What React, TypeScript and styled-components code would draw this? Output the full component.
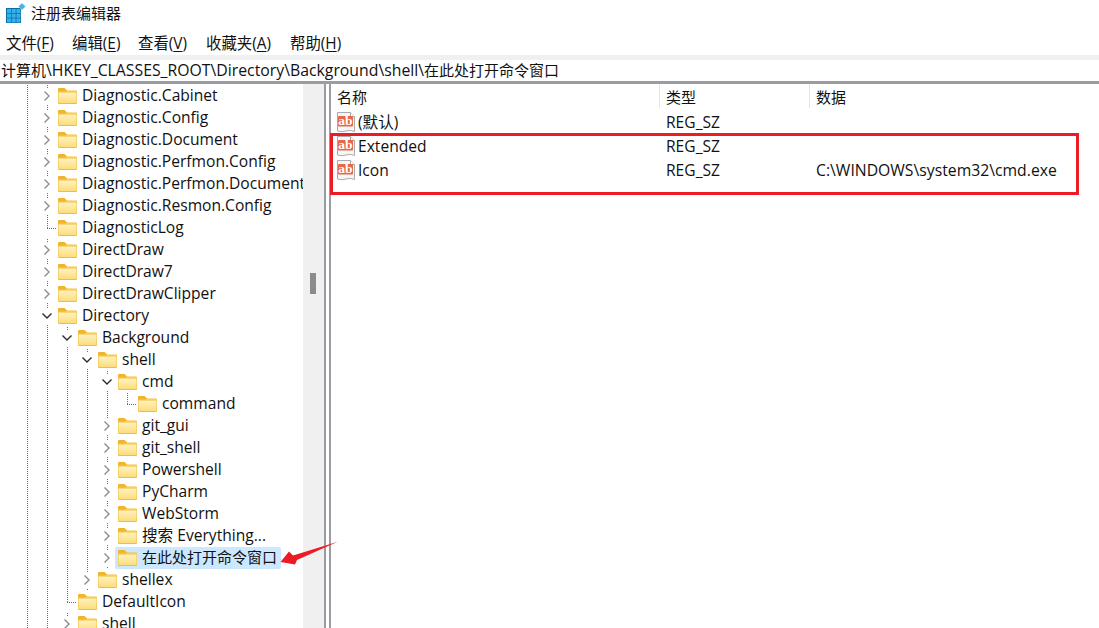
import React from "react";
import styled, { createGlobalStyle } from "styled-components";

const Global = createGlobalStyle`
  html, body { margin: 0; padding: 0; background: #fff; }
  #root { width: 1099px; height: 628px; overflow: hidden; }
  * { box-sizing: border-box; }
`;

const FONT = `"Open Sans", "Noto Sans", "Noto Sans CJK SC", sans-serif`;

const Page = styled.div`
  position: relative;
  width: 1099px;
  height: 628px;
  display: flex;
  flex-direction: column;
  overflow: hidden;
  font-family: ${FONT};
  font-size: 15.6px;
  color: #111;
`;
const TitleBar = styled.div`
  height: 28px;
  padding-left: 6px;
  display: flex;
  align-items: center;
  gap: 5px;
  font-size: 15px;
  flex: none;
  padding-bottom: 3px;
`;
const MenuBar = styled.div`
  height: 27px;
  padding: 2px 0 0 6px;
  display: grid;
  grid-template-columns: 66px 66px 68px 84px auto;
  align-items: center;
  font-size: 15.4px;
  flex: none;
  u { text-underline-offset: 2px; }
`;
const Band = styled.div`
  height: 5px;
  background: #f0f0f0;
  flex: none;
`;
const AddressBar = styled.div`
  height: 21px;
  padding: 0 0 2px 1px;
  display: flex;
  align-items: center;
  white-space: nowrap;
  font-size: 15.8px;
  flex: none;
`;
const Cjk = styled.span`
  font-size: 15px;
`;
const Rule = styled.div`
  height: 3px;
  background: #9a9ca1;
  flex: none;
`;
const Body = styled.div`
  flex: 1;
  min-height: 0;
  display: flex;
`;
const TreePane = styled.div`
  width: 303px;
  flex: none;
  overflow: hidden;
  padding-top: 1px;
`;
const Scrollbar = styled.div`
  width: 21px;
  flex: none;
  background: #f0f0f0;
  padding: 189px 0 0 7px;
`;
const Thumb = styled.div`
  width: 6px;
  height: 21px;
  background: #8b8b8b;
`;
const Splitter = styled.div`
  width: 7px;
  flex: none;
  border-left: 2px solid #9a9ca1;
  border-right: 2px solid #9a9ca1;
`;
const TreeRow = styled.div`
  height: 22px;
  padding-left: 17px;
  display: flex;
  align-items: stretch;
  white-space: nowrap;
`;
const Cell = styled.div<{ $line?: boolean }>`
  position: relative;
  width: 20px;
  flex: none;
  display: flex;
  align-items: center;
  justify-content: center;
  background-image: ${(p) =>
    p.$line ? "repeating-linear-gradient(to bottom, #6e6e6e 0 1px, transparent 1px 2px)" : "none"};
  background-size: 1px 100%;
  background-position: 10px 0;
  background-repeat: no-repeat;
`;
const Elbow = styled.div`
  width: 20px;
  flex: none;
  background-image:
    repeating-linear-gradient(to bottom, #6e6e6e 0 1px, transparent 1px 2px),
    repeating-linear-gradient(to right, #6e6e6e 0 1px, transparent 1px 2px);
  background-size: 1px 11px, 10px 1px;
  background-position: 10px 0, 10px 11px;
  background-repeat: no-repeat;
`;
const ChevronBox = styled.svg`
  width: 12px;
  height: 16px;
  background: #fff;
  display: block;
`;
const Entry = styled.div<{ $selected?: boolean }>`
  display: flex;
  align-items: center;
  height: 22px;
  margin-left: -2px;
  padding: 0 4px 0 3px;
  gap: 5px;
  border-radius: 2px;
  background: ${(p) => (p.$selected ? "#cce8ff" : "transparent")};
`;
const EntryText = styled.span<{ $cjk?: boolean }>`
  line-height: 20px;
  margin-bottom: 2px;
  font-size: ${(p) => (p.$cjk ? "15px" : "inherit")};
`;
const FolderSvg = styled.svg`
  width: 19px;
  height: 16px;
  flex: none;
  display: block;
`;

const ListPane = styled.div`
  flex: 1;
  min-width: 0;
  display: flex;
  flex-direction: column;
`;
const Columns = "329px 150px 1fr";
const HeaderRow = styled.div`
  display: grid;
  grid-template-columns: ${Columns};
  height: 26px;
  flex: none;
`;
const HeaderCell = styled.div`
  padding-left: 6px;
  display: flex;
  align-items: center;
  border-right: 1px solid #e5e5e5;
  margin-bottom: 2px;
  font-size: 15px;
  &:last-child { border-right: none; }
`;
const DataRow = styled.div`
  display: grid;
  grid-template-columns: ${Columns};
  height: 24px;
  align-items: center;
  flex: none;
`;
const NameCell = styled.div`
  display: flex;
  align-items: center;
  gap: 2px;
  padding-left: 5px;
`;
const NameText = styled.span`
  line-height: 20px;
  margin-top: -1px;
`;
const ValueCell = styled.div`
  padding-left: 6px;
  line-height: 20px;
`;
const DataCell = styled(ValueCell)`
  font-size: 15.75px;
`;
const RedBox = styled.div`
  position: absolute;
  left: 330px;
  top: 133px;
  width: 749px;
  height: 62px;
  border: 3px solid #ed1c24;
  pointer-events: none;
`;
const ArrowSvg = styled.svg`
  position: absolute;
  left: 275px;
  top: 535px;
  width: 70px;
  height: 35px;
`;

const Chevron = ({ open }: { open?: boolean }) => (
  <ChevronBox viewBox="0 0 12 16">
    <path
      d={open ? "M1.5 5.5 L6 10 L10.5 5.5" : "M3.5 3.5 L8 8 L3.5 12.5"}
      fill="none"
      stroke={open ? "#2b2b2b" : "#8c8c8c"}
      strokeWidth="1.4"
    />
  </ChevronBox>
);

const Folder = () => (
  <FolderSvg viewBox="0 0 19 16">
    <defs>
      <linearGradient id="fold" x1="0" y1="0" x2="0" y2="1">
        <stop offset="0" stopColor="#fff3c4" />
        <stop offset="1" stopColor="#fddc7a" />
      </linearGradient>
    </defs>
    <path d="M0 1 Q0 0 1 0 H6.5 L8.5 2 H9 V5 H0 Z" fill="#f0b429" />
    <path d="M0 2.5 H18 Q19 2.5 19 3.5 V15 Q19 16 18 16 H1 Q0 16 0 15 Z" fill="#f2bd3c" />
    <path d="M.5 4.5 H18.5 V15 H.5 Z" fill="url(#fold)" />
    <path d="M7 4.5 H18.5 V3.2 H8 Z" fill="#fbd468" />
  </FolderSvg>
);

const AppIcon = () => (
  <svg width="20" height="20" viewBox="0 0 20 20" style={{ display: "block" }}>
    <rect x="0" y="5" width="15" height="15" fill="#0a6ea8" />
    <g fill="#35b0e8">
      <rect x="1" y="6" width="4" height="4" />
      <rect x="5.7" y="6" width="4" height="4" />
      <rect x="10.4" y="6" width="4" height="4" />
      <rect x="1" y="10.7" width="4" height="4" />
      <rect x="5.7" y="10.7" width="4" height="4" />
      <rect x="10.4" y="10.7" width="4" height="4" />
      <rect x="1" y="15.4" width="4" height="4" />
      <rect x="5.7" y="15.4" width="4" height="4" />
      <rect x="10.4" y="15.4" width="4" height="4" />
    </g>
    <path d="M16 0 L19.5 3.5 L16 7 L12.5 3.5 Z" fill="#4fb4dc" stroke="#bfe3f2" strokeWidth=".6" />
  </svg>
);

const RegIcon = () => (
  <svg width="20" height="21" viewBox="0 0 20 21" style={{ display: "block", flex: "none" }}>
    <path d="M1.5 .5 H14.5 L18.5 4.5 V19.5 Q14 17.5 10 19 T1.5 19 Z" fill="#f6f6f6" stroke="#aaa" />
    <path d="M14.5 .5 V4.5 H18.5" fill="#fff" stroke="#aaa" />
    <rect x="2" y="4" width="15" height="10.5" fill="#e6694a" rx="1" />
    <text x="9.5" y="13" textAnchor="middle" fontSize="13.5" fontWeight="700" fill="#fff" fontFamily="'Liberation Serif', serif">ab</text>
  </svg>
);

type Row = { label: string; depth: number; state?: "open" | "closed" | "elbow"; selected?: boolean };

const rows: Row[] = [
  { label: "Diagnostic.Cabinet", depth: 0, state: "closed" },
  { label: "Diagnostic.Config", depth: 0, state: "closed" },
  { label: "Diagnostic.Document", depth: 0, state: "closed" },
  { label: "Diagnostic.Perfmon.Config", depth: 0, state: "closed" },
  { label: "Diagnostic.Perfmon.Document", depth: 0, state: "closed" },
  { label: "Diagnostic.Resmon.Config", depth: 0, state: "closed" },
  { label: "DiagnosticLog", depth: 0, state: "elbow" },
  { label: "DirectDraw", depth: 0, state: "closed" },
  { label: "DirectDraw7", depth: 0, state: "closed" },
  { label: "DirectDrawClipper", depth: 0, state: "closed" },
  { label: "Directory", depth: 0, state: "open" },
  { label: "Background", depth: 1, state: "open" },
  { label: "shell", depth: 2, state: "open" },
  { label: "cmd", depth: 3, state: "open" },
  { label: "command", depth: 4, state: "elbow" },
  { label: "git_gui", depth: 3, state: "closed" },
  { label: "git_shell", depth: 3, state: "closed" },
  { label: "Powershell", depth: 3, state: "closed" },
  { label: "PyCharm", depth: 3, state: "closed" },
  { label: "WebStorm", depth: 3, state: "closed" },
  { label: "搜索 Everything...", depth: 3, state: "closed" },
  { label: "在此处打开命令窗口", depth: 3, state: "closed", selected: true },
  { label: "shellex", depth: 2, state: "closed" },
  { label: "DefaultIcon", depth: 1, state: "elbow" },
  { label: "shell", depth: 1, state: "closed" },
];

const values = [
  { name: "(默认)", type: "REG_SZ", data: "" },
  { name: "Extended", type: "REG_SZ", data: "" },
  { name: "Icon", type: "REG_SZ", data: "C:\\WINDOWS\\system32\\cmd.exe" },
];

const TreeItem = ({ row }: { row: Row }) => (
  <TreeRow>
    {Array.from({ length: row.depth + 1 }, (_, i) => (
      <Cell key={i} $line />
    ))}
    {row.state === "elbow" ? (
      <Elbow />
    ) : (
      <Cell $line>
        <Chevron open={row.state === "open"} />
      </Cell>
    )}
    <Entry $selected={row.selected}>
      <Folder />
      <EntryText $cjk={row.selected}>{row.label}</EntryText>
    </Entry>
  </TreeRow>
);

export default function App() {
  return (
    <Page>
      <Global />
      <TitleBar>
        <AppIcon />
        <span>注册表编辑器</span>
      </TitleBar>
      <MenuBar>
        <span>文件(<u>F</u>)</span>
        <span>编辑(<u>E</u>)</span>
        <span>查看(<u>V</u>)</span>
        <span>收藏夹(<u>A</u>)</span>
        <span>帮助(<u>H</u>)</span>
      </MenuBar>
      <Band />
      <AddressBar>
        <Cjk>计算机</Cjk>\HKEY_CLASSES_ROOT\Directory\Background\shell\<Cjk>在此处打开命令窗口</Cjk>
      </AddressBar>
      <Rule />
      <Body>
        <TreePane>
          {rows.map((r, i) => (
            <TreeItem key={i} row={r} />
          ))}
        </TreePane>
        <Scrollbar>
          <Thumb />
        </Scrollbar>
        <Splitter />
        <ListPane>
          <HeaderRow>
            <HeaderCell>名称</HeaderCell>
            <HeaderCell>类型</HeaderCell>
            <HeaderCell>数据</HeaderCell>
          </HeaderRow>
          {values.map((v) => (
            <DataRow key={v.name}>
              <NameCell>
                <RegIcon />
                <NameText>{v.name}</NameText>
              </NameCell>
              <ValueCell>{v.type}</ValueCell>
              <DataCell>{v.data}</DataCell>
            </DataRow>
          ))}
        </ListPane>
      </Body>
      <RedBox />
      <ArrowSvg viewBox="0 0 70 35">
        <path d="M62.7 6.7 L18 20.5 L14 16.5 L5.5 27 L20 29.5 L22 25 Z" fill="#ed1c24" />
      </ArrowSvg>
    </Page>
  );
}
